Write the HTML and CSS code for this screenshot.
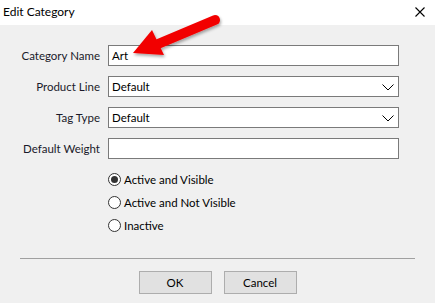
FILE: index.html
```html
<!DOCTYPE html>
<html lang="en">
<head>
    <meta charset="UTF-8">
    <title>Edit Category</title>
    <link rel="stylesheet" href="styles.css">
</head>
<body>

    <!-- Title Bar -->
    <div class="title-bar">
        <span class="title">Edit Category</span>
        <svg class="close-icon" width="10" height="10" viewBox="0 0 10 10">
            <path d="M0.5 0.5 L9.5 9.5 M9.5 0.5 L0.5 9.5" stroke="#000" stroke-width="1.1" fill="none"/>
        </svg>
    </div>

    <!-- Form -->
    <div class="dialog-body">
        <div class="form-row">
            <label class="form-label">Category Name</label>
            <div class="field">Art</div>
        </div>
        <div class="form-row">
            <label class="form-label">Product Line</label>
            <div class="field select">
                <span>Default</span>
                <svg width="12" height="7" viewBox="0 0 12 7"><path d="M0.5 0.5 L6 6 L11.5 0.5" stroke="#000" fill="none"/></svg>
            </div>
        </div>
        <div class="form-row">
            <label class="form-label">Tag Type</label>
            <div class="field select">
                <span>Default</span>
                <svg width="12" height="7" viewBox="0 0 12 7"><path d="M0.5 0.5 L6 6 L11.5 0.5" stroke="#000" fill="none"/></svg>
            </div>
        </div>
        <div class="form-row">
            <label class="form-label">Default Weight</label>
            <div class="field"></div>
        </div>

        <div class="radio-group">
            <div class="radio-item"><span class="radio checked"></span>Active and Visible</div>
            <div class="radio-item"><span class="radio"></span>Active and Not Visible</div>
            <div class="radio-item"><span class="radio"></span>Inactive</div>
        </div>
    </div>

    <!-- Footer -->
    <div class="dialog-footer">
        <div class="separator"></div>
        <div class="button-row">
            <button class="btn">OK</button>
            <button class="btn">Cancel</button>
        </div>
    </div>

    <!-- Annotation arrow -->
    <svg class="arrow" width="110" height="60" viewBox="0 0 110 60">
        <defs>
            <filter id="shadow" x="-20%" y="-20%" width="140%" height="160%">
                <feDropShadow dx="1" dy="2" stdDeviation="1.5" flood-color="#000" flood-opacity="0.35"/>
            </filter>
        </defs>
        <g filter="url(#shadow)" fill="#f20000">
            <line x1="92" y1="8" x2="35" y2="32" stroke="#f20000" stroke-width="10" stroke-linecap="round"/>
            <polygon points="10,41 29,18 41,43"/>
        </g>
    </svg>

</body>
</html>
```

FILE: styles.css
```css
/* Global Styles */
body {
    margin: 0;
    width: 435px;
    height: 303px;
    background-color: #f0f0f0;
    font-family: 'Lato', 'Noto Sans', sans-serif;
    font-size: 11.5px;
    color: #000;
    position: relative;
    overflow: hidden;
}

/* Title Bar */
.title-bar {
    height: 25px;
    background-color: #fff;
    display: flex;
    align-items: center;
    justify-content: space-between;
    padding: 0 10px 0 3px;
}

.title {
    font-size: 12px;
    margin-top: -2px;
}

.close-icon {
    margin-top: -2px;
}

/* Form */
.dialog-body {
    padding-top: 20px;
    display: flex;
    flex-direction: column;
    gap: 10px;
}

.form-row {
    display: flex;
    align-items: center;
    gap: 8px;
}

.form-label {
    width: 100px;
    text-align: right;
    color: #1a1a2a;
}

.field {
    height: 19px;
    border: 1px solid #7a7a7a;
    background-color: #fff;
    display: flex;
    align-items: center;
    justify-content: space-between;
    padding: 0 4px 0 3px;
    box-sizing: content-box;
    width: 282px;
}

.select svg {
    margin-top: 1px;
}

/* Radio Buttons */
.radio-group {
    display: flex;
    flex-direction: column;
    gap: 8px;
    margin-top: 3px;
    padding-left: 108px;
}

.radio-item {
    display: flex;
    align-items: center;
    gap: 3px;
    height: 15px;
}

.radio {
    width: 11px;
    height: 11px;
    border: 1px solid #333;
    border-radius: 50%;
    background-color: #fff;
    display: flex;
    align-items: center;
    justify-content: center;
}

.radio.checked::after {
    content: "";
    width: 7px;
    height: 7px;
    border-radius: 50%;
    background-color: #333;
}

/* Footer */
.dialog-footer {
    position: absolute;
    top: 258px;
    left: 0;
    right: 0;
}

.separator {
    height: 1px;
    background-color: #a0a0a0;
    margin: 0 20px;
}

.button-row {
    display: flex;
    justify-content: center;
    gap: 12px;
    margin-top: 12px;
}

.btn {
    width: 73px;
    height: 23px;
    background-color: #e1e1e1;
    border: 1px solid #adadad;
    font-family: 'Lato', 'Noto Sans', sans-serif;
    font-size: 11.5px;
    color: #000;
    padding: 0;
}

/* Annotation Arrow */
.arrow {
    position: absolute;
    left: 123px;
    top: 12px;
}
```
